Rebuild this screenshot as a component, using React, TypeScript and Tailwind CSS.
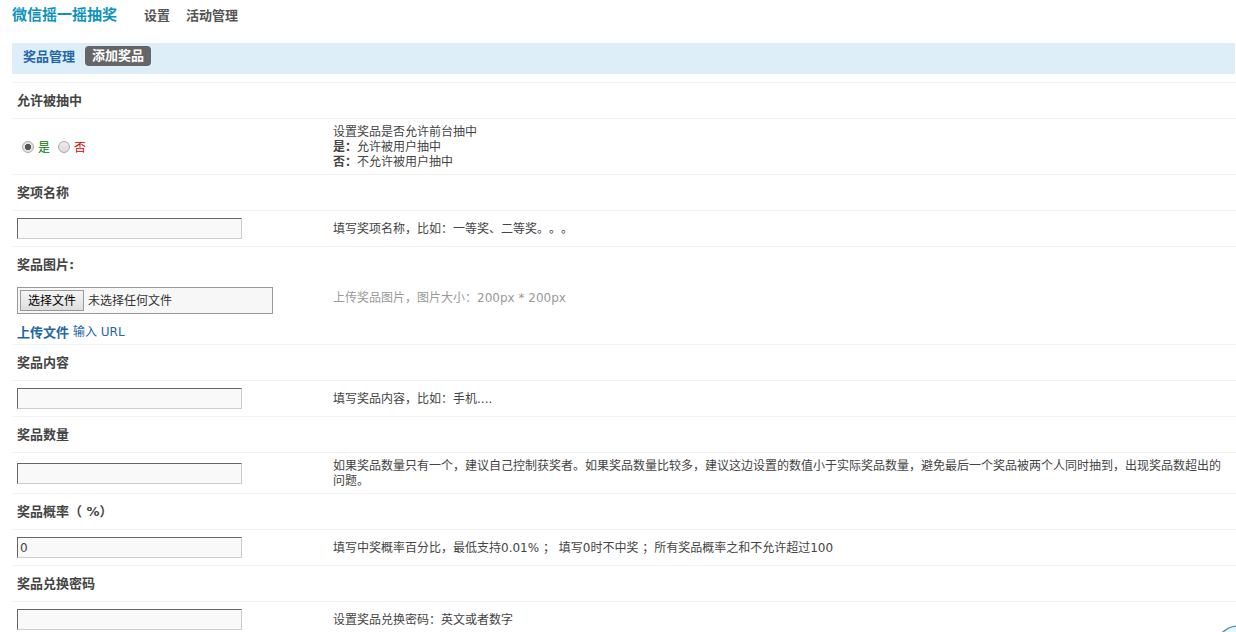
import { useRef, useState, type ReactNode } from 'react';

interface FieldProps {
    id?: string;
    title: string;
    children: ReactNode;
    hint: ReactNode;
    rowClass?: string;
}

function Field({ id, title, children, hint, rowClass = 'h-9 border-t items-center' }: FieldProps) {
    return (
        <section>
            <div className="flex h-9 items-center border-t border-[#f3f3f3] px-[5px]">
                {id ? (
                    <label htmlFor={id} className="text-[13px] font-bold leading-4">{title}</label>
                ) : (
                    <h2 className="text-[13px] font-bold leading-4">{title}</h2>
                )}
            </div>
            <div className={`flex border-[#f3f3f3] px-[5px] ${rowClass}`}>
                <div className="w-[316px] shrink-0">{children}</div>
                <div className="min-w-0 flex-1 pt-[2px]">{hint}</div>
            </div>
        </section>
    );
}

function TextInput({ id, defaultValue = '' }: { id: string; defaultValue?: string }) {
    return (
        <input
            id={id}
            name={id}
            type="text"
            defaultValue={defaultValue}
            className="block h-[21px] w-[225px] border border-[#ccc] border-l-[#666] border-t-[#666] bg-[#f9f9f9] px-[2px] text-[12px] outline-none"
        />
    );
}

const radioClass =
    'h-3 w-3 appearance-none rounded-full border border-[#aaa] bg-linear-to-b from-[#ececec] to-[#dcdcdc] checked:bg-radial checked:from-[#555] checked:from-40% checked:to-[#e4e4e4] checked:to-50%';

function FilePicker() {
    const inputRef = useRef<HTMLInputElement>(null);
    const [fileName, setFileName] = useState('未选择任何文件');

    return (
        <div className="flex h-[27px] w-64 items-center border border-[#999] bg-[#f7f7f7] px-[2px]">
            <input
                ref={inputRef}
                id="prizeImage"
                type="file"
                className="hidden"
                onChange={(e) => setFileName(e.target.files?.[0]?.name ?? '未选择任何文件')}
            />
            <button
                type="button"
                onClick={() => inputRef.current?.click()}
                className="h-[21px] w-16 border border-[#999] bg-linear-to-b from-[#f6f6f6] to-[#dedede] text-[12px] leading-4 text-black"
            >
                选择文件
            </button>
            <span className="ml-1 pt-[2px] text-[#333]">{fileName}</span>
        </div>
    );
}

export default function App() {
    return (
        <div className="overflow-hidden bg-white pl-3 font-['DejaVu_Sans','Noto_Sans_CJK_SC',sans-serif] text-[12px] leading-[15px] text-[#444] [text-spacing-trim:space-all]">
            <header className="flex h-[43px] items-start pt-[5px] font-bold leading-5">
                <h1 className="w-[132px] text-[15px] text-[#0d93bb]">微信摇一摇抽奖</h1>
                <nav className="flex gap-4 pt-px text-[13px] text-[#555]">
                    <a href="#settings">设置</a>
                    <a href="#activity">活动管理</a>
                </nav>
            </header>

            <nav className="mr-px flex h-[31px] items-start gap-[10px] bg-[#deeef8] pl-[11px] pt-[3px] text-[13px] font-bold leading-5">
                <a href="#prizes" className="pt-px text-[#2366a8]">奖品管理</a>
                <a href="#add" className="rounded-[4px] bg-[#666] px-[7px] text-white">添加奖品</a>
            </nav>

            <form className="mt-2">
                <Field
                    title="允许被抽中"
                    rowClass="h-14 border-t items-center"
                    hint={
                        <>
                            <p>设置奖品是否允许前台抽中</p>
                            <p><b>是：</b>允许被用户抽中</p>
                            <p><b>否：</b>不允许被用户抽中</p>
                        </>
                    }
                >
                    <div className="flex gap-2 pl-[5px]">
                        <label className="flex items-center gap-1 text-[#008000]">
                            <input type="radio" name="allow" defaultChecked className={radioClass} />
                            <span className="pt-1">是</span>
                        </label>
                        <label className="flex items-center gap-1 text-[#d00]">
                            <input type="radio" name="allow" className={radioClass} />
                            <span className="pt-1">否</span>
                        </label>
                    </div>
                </Field>

                <Field id="prizeName" title="奖项名称" hint="填写奖项名称，比如：一等奖、二等奖。。。">
                    <TextInput id="prizeName" />
                </Field>

                <Field
                    id="prizeImage"
                    title="奖品图片:"
                    rowClass="h-[62px] items-start pt-[5px]"
                    hint={<p className="pt-[2px] text-[#999]">上传奖品图片，图片大小：200px * 200px</p>}
                >
                    <FilePicker />
                    <div className="mt-[10px] flex items-center gap-1 text-[#2366a8]">
                        <a href="#upload" className="text-[13px] font-bold">上传文件</a>
                        <a href="#url" className="pt-px">输入 URL</a>
                    </div>
                </Field>

                <Field id="prizeContent" title="奖品内容" hint="填写奖品内容，比如：手机....">
                    <TextInput id="prizeContent" />
                </Field>

                <Field
                    id="prizeCount"
                    title="奖品数量"
                    rowClass="min-h-[41px] border-t items-center"
                    hint="如果奖品数量只有一个，建议自己控制获奖者。如果奖品数量比较多，建议这边设置的数值小于实际奖品数量，避免最后一个奖品被两个人同时抽到，出现奖品数超出的问题。"
                >
                    <TextInput id="prizeCount" />
                </Field>

                <Field
                    id="prizeRate"
                    title="奖品概率（ %）"
                    hint="填写中奖概率百分比，最低支持0.01% ； 填写0时不中奖 ；所有奖品概率之和不允许超过100"
                >
                    <TextInput id="prizeRate" defaultValue="0" />
                </Field>

                <Field
                    id="prizeCode"
                    title="奖品兑换密码"
                    rowClass="border-t items-center pt-[7px]"
                    hint="设置奖品兑换密码：英文或者数字"
                >
                    <TextInput id="prizeCode" />
                </Field>
            </form>

            {/* floating widget peeking in from the corner */}
            <svg className="fixed bottom-0 right-0" width="20" height="8" viewBox="0 0 20 8" fill="none" aria-hidden="true">
                <circle cx="22" cy="24" r="22" fill="#e3f5fd" stroke="#4c87ad" strokeWidth="1.4" />
            </svg>
        </div>
    );
}
